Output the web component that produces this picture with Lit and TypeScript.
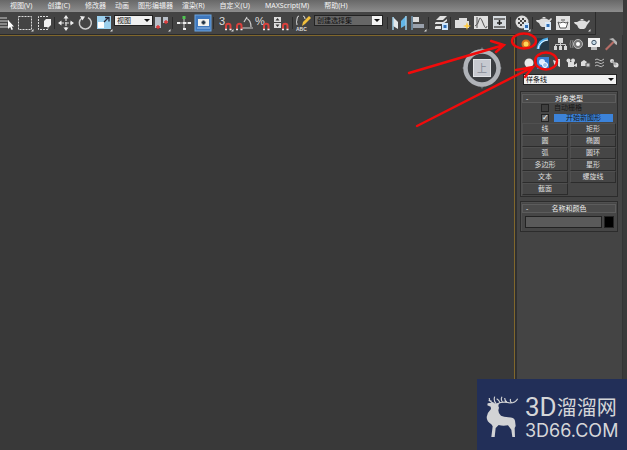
import { LitElement, html, css, svg, type TemplateResult } from "lit";
import { customElement, property } from "lit/decorators.js";
import { classMap } from "lit/directives/class-map.js";

const magnet = svg`<path d="M10 15.500V12a2 2 0 0 1 4.500 0v3.500" fill="none" stroke="#d8413c" stroke-width="2"/><path d="M9 15.500h2M13.500 15.500h2" stroke="#eee" stroke-width="1.500"/>`;
const flyout = svg`<path d="M17.500 15v2.500H15z" fill="#ddd"/>`;
const cross = svg`<path d="M9 3v12M3 9h12" stroke="#ddd" stroke-width="1.200" stroke-dasharray="4 1"/><path d="M9 1l2.500 3.500h-5zM9 17l2.500-3.500h-5zM1 9l3.500-2.500v5zM17 9l-3.500-2.500v5z" fill="#eee"/>`;
const pot = svg`<path d="M4 8q5-3.500 10 0l2-2 1 1-3 4q-1 3-3 4H7q-2-1-3-4-3-1-3-3l3 0z" fill="#ddd"/><path d="M7 6q2-2 4 0z" fill="#eee"/>`;

const icons: Record<string, TemplateResult> = {
  list: svg`<path d="M0 4h7M0 7h9M0 10h7M0 13h8" stroke="#ccc" stroke-width="1.200"/><path d="M8 6v9l2.200-2 1.300 3 1.500-.8-1.400-2.700h2.400z" fill="#fff"/>`,
  region: svg`<rect x="2.500" y="2.500" width="13" height="13" fill="none" stroke="#ddd" stroke-dasharray="2 1"/>${flyout}`,
  crossing: svg`<path d="M13 2.500H3.500v13H13V12" fill="none" stroke="#ddd" stroke-dasharray="2 1"/><path d="M9 7l2-2h5v6l-2 2H9z" fill="#f2f2f2"/>`,
  move: cross,
  rotate: svg`<path d="M6 4a6 6 0 1 0 6-.4" fill="none" stroke="#ccc" stroke-width="1.500"/><path d="M4 2l5 .5-2.500 4z" fill="#eee"/>`,
  scale: svg`<rect x="2" y="2" width="14" height="13" fill="#9bd0ee"/><path d="M3 8h6v6H3z" fill="#fff"/><path d="M9 8l4-4M10 3.500h4v4" fill="none" stroke="#223" stroke-width="1.300"/>${flyout}`,
  pivot: svg`<path d="M2 3h6v11H2z" fill="#b8bfc8"/><path d="M10 3h5v6h-5z" fill="#b8bfc8"/><path d="M3 13h4M5 11v4M11 8h4M13 6v4" stroke="#d33" stroke-width="1.300"/>${flyout}`,
  manipulate: svg`<path d="M9 4v12M3 9h12" stroke="#ccc"/><path d="M7.500 2h3v3h-3z" fill="#4fc650"/><path d="M2 8h3v2H2zM13 8h3v2h-3zM8 14h3v2H8zM8 8h3v2H8z" fill="#eee"/>`,
  keyboard: svg`<rect x="1" y="1" width="16" height="16" fill="#3f78bd" stroke="#6da4de"/><path d="M4 5h11v7H4z" fill="#f2f2ee"/><path d="M3 14h13" stroke="#9fc2ea"/><path d="M9.500 6.500v4M7.500 8.500h4" stroke="#234" stroke-width="2"/>`,
  snap: svg`<text x="3" y="11" class="glyph">3</text>${magnet}${flyout}`,
  angle: svg`<path d="M7 14h11M9 8L12 3M11 4q5 2 5 9" fill="none" stroke="#ccc" stroke-width="1.200"/><path d="M2 15.500V12a2 2 0 0 1 4.500 0v3.500" fill="none" stroke="#d8413c" stroke-width="2"/><path d="M1 15.500h2M5.500 15.500h2" stroke="#eee" stroke-width="1.500"/>`,
  percent: svg`<text x="1" y="11" class="glyph">%</text>${magnet}`,
  spinner: svg`<path d="M1 3h7v5H1zM1 9h7v5H1z" fill="#ddd"/><path d="M2.500 6.500l2-2.500 2 2.500zM2.500 10.500l2 2.500 2-2.500z" fill="#333"/>${magnet}`,
  named: svg`<path d="M4 2q-2 0-2 3t-1 3q1 0 1 3M8 2q2 0 2 3" fill="none" stroke="#ddd"/><path d="M7 12l1-4 6-6 2 2-6 6z" fill="#f2c03c"/><text x="1" y="17" class="tiny">ABC</text>`,
  mirror: svg`<path d="M3 3l5 5v7l-5-3z" fill="#e4e8ea"/><path d="M16 2l-5 5v7l5-3z" fill="#62b6e8"/><path d="M3 3v13M16 2v14" stroke="#9ccbe6" stroke-width="1.500"/>`,
  align: svg`<path d="M3 2v14" stroke="#8cc5ee"/><path d="M4 3h6v5H4z" fill="#ddd"/><path d="M4 10h11v4H4z" fill="#9aa1ac"/>${flyout}`,
  layers: svg`<path d="M5 6l4-4h7l-4 4zM4 9l1-1h7l4-3v2l-4 3H4zM4 13l1-1h5v3H4z" fill="#e2e2e2"/><path d="M11 9h6v7h-6z" fill="#cfe6fb"/><path d="M12.500 11h3v3h-3z" fill="#2f6fb8"/>`,
  ribbon: svg`<path d="M2 6h4V4h8v3h2v7H2z" fill="#dedede"/><path d="M14 8l1 3 3 1-3 1-1 3-1-3-3-1 3-1z" fill="#ffcb40"/>`,
  curve: svg`<rect x="2" y="2" width="14" height="13" fill="#e0e0e0"/><path d="M3 12q3-1 4-6t4 3 4 3M5 3v11" fill="none" stroke="#555"/>`,
  schematic: svg`<rect x="2" y="2" width="13" height="13" fill="#d5dade"/><path d="M3 5h11M3 13h11" stroke="#555" stroke-width="1.500"/><path d="M8.500 6v5M6 9h5" stroke="#222" stroke-width="1.500"/>`,
  material: svg`<circle cx="9" cy="8" r="6.500" fill="#ddd"/><path d="M5 4h2v2H5zM9 4h2v2H9zM7 6h2v2H7zM11 6h2v2h-2zM5 8h2v2H5zM9 8h2v2H9zM7 10h2v2H7z" fill="#444"/><path d="M11 9h5v7h-5z" fill="#cfe6fb"/><path d="M12 11h3v3h-3z" fill="#2f6fb8"/>${flyout}`,
  setup: svg`<g transform="translate(0 -2)">${pot}</g><path d="M10 8h6v8h-6z" fill="#dceaf8"/><path d="M11.500 10h3v3h-3z" fill="#2f6fb8"/>`,
  frame: svg`<rect x="2" y="2" width="14" height="14" fill="#e2e2e2"/><path d="M4 8l2 1q3-2 6 0l2-1-1 3-1 3H6l-1-3zM7 6h4" fill="#fff" stroke="#555"/>`,
  render: svg`${pot}${flyout}`,
  create: svg`<circle cx="9" cy="9" r="4.500" fill="#d9701c"/><circle cx="9" cy="9" r="2.500" fill="#ffd85a"/>`,
  modify: svg`<rect x="3" y="3" width="12" height="12" fill="#253846"/><path d="M4 14Q5 5 14 4" fill="none" stroke="#4fb0ee" stroke-width="3"/><path d="M4 14Q5 6 14 5" fill="none" stroke="#e8f5ff"/>`,
  hierarchy: svg`<path d="M7 3h5v5H7zM3 11h3v4H3zM8 11h3v4H8zM13 11h3v4h-3z" fill="#d8d8d8"/><path d="M9.500 7v4M4.500 11V9.500h10V11" fill="none" stroke="#ccc"/>`,
  motion: svg`<circle cx="10" cy="9" r="4.500" fill="#777" stroke="#bbb"/><circle cx="10" cy="9" r="2" fill="#fff"/><path d="M3 5q-2 4 0 8M5 5q-2 4 0 8" fill="none" stroke="#888"/>`,
  display: svg`<rect x="3" y="3" width="12" height="9" fill="#f2f2f2"/><path d="M6 12h6v3H6z" fill="#bbb"/><circle cx="9" cy="7.500" r="2.200" fill="#c6dbe8" stroke="#456"/>`,
  utilities: svg`<path d="M3 14l8-8 1.500 1.500-8 8z" fill="#b56d66"/><path d="M7 4l4-1 4 4v3l-2-1-2-3z" fill="#b5b5b5"/>`,
  sphere: svg`<circle cx="9" cy="9" r="4.500" fill="#e8e8e8"/>`,
  shapes: svg`<rect x="3" y="3" width="12" height="12" fill="#3b7fd0"/><circle cx="8" cy="8" r="3" fill="#dfeeff"/><circle cx="11" cy="11" r="2.500" fill="#9cc4ee" stroke="#fff"/>`,
  light: svg`<path d="M5 6l3 1 1 4-2 2zM8 5h4v8l-2-1V9L8 8z" fill="#ddd"/>`,
  camera: svg`<circle cx="6.500" cy="6.500" r="2" fill="#ddd"/><circle cx="11" cy="6.500" r="2" fill="#ddd"/><path d="M6 8h6v5H6zM12 11l3-2v4l-3-1z" fill="#ddd"/>`,
  helper: svg`<path d="M5 12V8l3-2 3 2v4z" fill="#ddd"/><path d="M10 9h4v4h-4z" fill="#ccc" stroke="#555"/>`,
  warp: svg`<path d="M5 6q2-2 4 0t5-1M5 9q2-2 4 0t5-1M5 12q2-2 4 0t5-1" fill="none" stroke="#bbb"/>`,
  system: svg`<circle cx="8" cy="7" r="2" fill="#ddd"/><circle cx="12" cy="11" r="2.500" fill="#ddd"/><path d="M8 7l4 4" stroke="#aaa" stroke-width="2"/>`,
};

@customElement("icon-button")
class IconButton extends LitElement {
  @property() name = "";
  @property() label = "";
  static styles = css`
    :host { display: block; flex: none; width: 19px; height: 18px; }
    button { display: block; width: 100%; height: 100%; padding: 0; border: 0; background: none; }
    svg { display: block; width: 18px; height: 18px; }
    .glyph { font: 11px "Liberation Sans", sans-serif; fill: #ddd; }
    .tiny { font: bold 5px "Liberation Sans", sans-serif; fill: #ddd; }
  `;
  render() {
    return html`<button type="button" aria-label=${this.label} title=${this.label}>
      <svg viewBox="0 0 18 18" aria-hidden="true">${icons[this.name]}</svg>
    </button>`;
  }
}

const tool = (name: string, label: string) => html`<icon-button name=${name} label=${label}></icon-button>`;
const sep = html`<i class="sep"></i>`;

@customElement("app-root")
class AppRoot extends LitElement {
  static styles = css`
    * { box-sizing: border-box; }
    :host {
      position: relative; display: flex; flex-direction: column; min-height: 100vh;
      background: #444; color: #ddd; border-right: 4px solid #3a3a3a;
      font: 7px/10px "Noto Sans", "Noto Sans CJK SC", sans-serif;
    }
    button, input, select { font: inherit; color: inherit; margin: 0; border-radius: 0; }
    .menu { display: flex; gap: 9px; height: 12px; padding: 0 10px; background: linear-gradient(#686868, #8c8c8c); }
    .menu button { padding: 0; border: 0; background: none; color: #f4f4f4; white-space: nowrap; line-height: 12px; }
    .menu .keyed { padding-right: 6px; }
    .tools { display: flex; align-items: center; align-self: flex-start; height: 23px; padding-right: 3px; border: solid #2b2b2b; border-width: 0 1px 1px 0; }
    .sep { flex: none; width: 3px; height: 12px; border-left: 1px solid #2c2c2c; }
    .first { width: 16px; overflow: hidden; }
    .pick { position: relative; display: block; }
    .pick select { display: block; width: 100%; height: 11px; padding: 0 2px; border: 1px solid #222; appearance: none; background: #f0f0f0; color: #111; line-height: 9px; }
    .pick::after { content: ""; position: absolute; right: 3px; top: 4px; border: solid transparent; border-width: 3px 3px 0; border-top-color: #111; }
    .coords { width: 39px; align-self: flex-start; padding-top: 3px; }
    .coords::after, .sets::after { top: 7px; }
    .sets { width: 69px; margin-right: 4px; align-self: flex-start; padding-top: 3px; }
    .sets select { background: linear-gradient(90deg, #666 57px, #f4f4f4 57px); }
    .work { display: flex; flex: 1; }
    .viewport { flex: 1; display: flex; justify-content: flex-end; align-items: flex-start; padding: 11px 12px; background: #393939; border: solid #80672c; border-width: 1px 1px 0 0; }
    .cube { width: 40px; height: 42px; }
    .cube text { font: 10px "Noto Sans CJK SC", sans-serif; fill: #858b97; }
    .panel { width: 108px; border-left: 2px solid #303030; border-right: 1px solid #343434; }
    .tabs { display: flex; height: 17px; }
    .tabs icon-button { width: 17px; }
    .kinds { display: flex; height: 19px; padding: 2px 0 0 3px; }
    .kinds icon-button { width: 14px; }
    .family { margin: 3px 5px 6px 6px; }
    .roll { border: 1px solid #2c2c2c; padding: 2px 1px 1px; background: #464646; margin: 0 4px 4px 3px; box-shadow: inset 1px 1px #505050; }
    .title { position: relative; display: block; width: 100%; height: 9px; padding: 0; border: 1px solid #5c5c5c; background: #4b4b4b; line-height: 7px; text-align: center; color: #eee; }
    .sign { position: absolute; left: 3px; }
    .check { display: flex; align-items: center; gap: 5px; height: 10px; padding: 0 3px 0 19px; color: #161616; }
    .check input { appearance: none; flex: none; width: 8px; height: 8px; border: 1px solid #222; background: #3e3e3e; color: #fff; }
    .check input:checked { background: #666; }
    .check input:checked::before { content: "✓"; display: block; font: bold 8px/6px "DejaVu Sans", sans-serif; }
    .check span { flex: 1; line-height: 8px; }
    .check .on { background: #3c83da; text-align: center; }
    .grid { display: grid; grid-template-columns: 1fr 1fr; column-gap: 2px; }
    .grid button { height: 12px; padding: 0; border: solid; border-width: 1px; border-color: #505050 #2c2c2c #2c2c2c #505050; background: #464646; color: #ddd; line-height: 10px; }
    .name { display: flex; gap: 2px; padding: 3px 2px 2px 3px; }
    .name input { flex: 1; min-width: 0; height: 12px; border: 1px solid #222; background: #5a5a5a; }
    .swatch { width: 10px; height: 12px; padding: 0; border: 1px solid #222; background: #000; }
    .brand { position: absolute; right: -4px; bottom: 0; display: flex; gap: 4px; width: 150px; height: 71px; padding: 14px 8px 0 8px; background: #222f58; color: #d5d6d8; }
    .deer { flex: none; width: 36px; height: 46px; }
    .words { white-space: nowrap; }
    .big { display: flex; align-items: center; height: 28px; font: 400 20px/28px "Noto Sans CJK SC", sans-serif; }
    .big b { font: 400 26px/28px Roboto, sans-serif; }
    .site { font: 400 18px/20px Inter, sans-serif; }
    .marks { position: absolute; right: -4px; top: 30px; width: 227px; height: 100px; pointer-events: none; }
  `;

  render() {
    const menus = ["视图(V)", "创建(C)", "修改器", "动画", "图形编辑器", "渲染(R)", "自定义(U)", "MAXScript(M)", "帮助(H)"];
    const types = ["线", "矩形", "圆", "椭圆", "弧", "圆环", "多边形", "星形", "文本", "螺旋线", "截面"];
    return html`
      <nav class="menu">
        ${menus.map((m) => html`<button type="button" class=${classMap({ keyed: m.includes("(") })}>${m}</button>`)}
      </nav>
      <div class="tools" role="toolbar">
        <icon-button class="first" name="list" label="按名称选择"></icon-button>
        ${tool("region", "选择区域")}${tool("crossing", "窗口/交叉")}${sep}
        ${tool("move", "移动")}${tool("rotate", "旋转")}${tool("scale", "缩放")}
        <label class="pick coords"><select aria-label="参考坐标系"><option>视图</option></select></label>
        ${tool("pivot", "轴点中心")}${sep}${tool("manipulate", "操纵")}${tool("keyboard", "键盘快捷键覆盖")}${sep}
        ${tool("snap", "捕捉")}${tool("angle", "角度捕捉")}${tool("percent", "百分比捕捉")}${tool("spinner", "微调器捕捉")}${sep}
        ${tool("named", "编辑命名选择集")}
        <label class="pick sets"><select aria-label="命名选择集"><option>创建选择集</option></select></label>
        ${sep}${tool("mirror", "镜像")}${tool("align", "对齐")}${sep}${tool("layers", "层管理器")}${sep}
        ${tool("ribbon", "功能区")}${tool("curve", "曲线编辑器")}${tool("schematic", "图解视图")}${sep}
        ${tool("material", "材质编辑器")}${sep}${tool("setup", "渲染设置")}${tool("frame", "渲染帧窗口")}${tool("render", "渲染")}
      </div>
      <div class="work">
        <main class="viewport">
          <svg class="cube" viewBox="0 0 40 42" aria-hidden="true">
            <path d="M20 0l3 4h-6zM20 42l3-4h-6zM0 21l4-3v6zM40 21l-4-3v6z" fill="#666a6e"/>
            <circle cx="20" cy="21" r="16.500" fill="#3b3e42" stroke="#b0b3b8" stroke-width="4.500"/>
            <rect x="11.500" y="12.500" width="17" height="17" fill="#c6c9d0" stroke="#e0e2e6"/>
            <text x="15" y="25">上</text>
          </svg>
        </main>
        <aside class="panel">
          <div class="tabs">
            ${tool("create", "创建")}${tool("modify", "修改")}${tool("hierarchy", "层次")}${tool("motion", "运动")}${tool("display", "显示")}${tool("utilities", "实用程序")}
          </div>
          <div class="kinds">
            ${tool("sphere", "几何体")}${tool("shapes", "图形")}${tool("light", "灯光")}${tool("camera", "摄影机")}${tool("helper", "辅助对象")}${tool("warp", "空间扭曲")}${tool("system", "系统")}
          </div>
          <label class="pick family"><select aria-label="图形类别"><option>样条线</option></select></label>
          <section class="roll">
            <button type="button" class="title"><span class="sign">-</span>对象类型</button>
            <label class="check"><input type="checkbox" /><span>自动栅格</span></label>
            <label class="check"><input type="checkbox" checked /><span class="on">开始新图形</span></label>
            <div class="grid">${types.map((t) => html`<button type="button">${t}</button>`)}</div>
          </section>
          <section class="roll">
            <button type="button" class="title"><span class="sign">-</span>名称和颜色</button>
            <div class="name">
              <input type="text" aria-label="名称" />
              <button type="button" class="swatch" aria-label="颜色"></button>
            </div>
          </section>
        </aside>
      </div>
      <div class="brand">
        <svg class="deer" viewBox="9 21 108 138" aria-hidden="true">
          <path d="M17 52l12-2 10 2 12 0-2 8 2 5-2 8q0 10 8 16 8 4 22 5 17 0 20 10l2 16-3 6 1 27h-8l-3-22-10-13q-16 3-28-1l-9 9-3 27h-10l4-32-4-6q-14-8-14-22 1-12 13-24l-1-7-10-4z" fill="#d2d3d5"/>
          <path d="M36 52Q21 48 22 36M29 46L20 43M42 52Q34 44 38 32M46 53q18-8 38-2 16 0 23-13M54 50q-3-8-10-12M62 49q-7-8-2-17M75 49q-7-5-7-13M88 50q-5-6-2-11" fill="none" stroke="#d2d3d5" stroke-width="3.500"/>
        </svg>
        <div class="words">
          <div class="big"><b>3D</b>溜溜网</div>
          <div class="site">3D66.COM</div>
        </div>
      </div>
      <svg class="marks" viewBox="400 30 227 100" fill="none" stroke="#f10b0b" stroke-width="2.400" stroke-linecap="round" aria-hidden="true">
        <path d="M409 73L504 45M491 41L504 45L496 52M417 126L533 67M516 70L533 67L525 77"/>
        <ellipse cx="524" cy="41" rx="12" ry="7.500"/>
        <ellipse cx="546" cy="61" rx="11" ry="8.500"/>
      </svg>`;
  }
}
